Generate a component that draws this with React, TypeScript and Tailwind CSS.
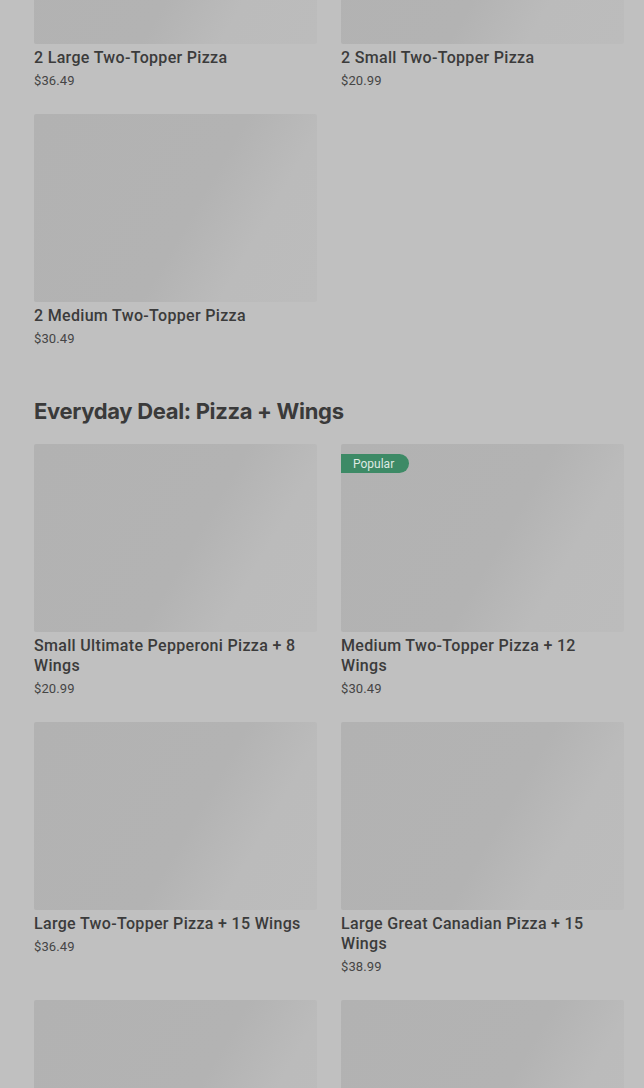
import React from "react";

type Item = { name: string; price: string; popular?: boolean };

const Card = ({ item }: { item: Item }) => (
  <div className="flex flex-col">
    <div className="relative h-[188px] rounded-[2px] bg-[linear-gradient(120deg,#b2b2b2_0%,#b3b3b3_55%,#bbbbbb_75%,#bcbcbc_100%)]">
      {item.popular && (
        <div className="absolute left-0 top-[10px] flex h-[19px] w-[68px] items-center rounded-r-full bg-[#3d8a66] pl-[12px] text-[12px] text-[#dfe9e3]">
          Popular
        </div>
      )}
    </div>
    <div className="mt-[4px] text-[16px] font-medium leading-[20px] tracking-[0.02em] text-[#3b3b3b]">{item.name}</div>
    <div className="mt-[3px] text-[13px] leading-[20px] tracking-[0.01em] text-[#454545]">{item.price}</div>
  </div>
);

export default function App() {
  const first: Item[] = [
    { name: "2 Large Two-Topper Pizza", price: "$36.49" },
    { name: "2 Small Two-Topper Pizza", price: "$20.99" },
    { name: "2 Medium Two-Topper Pizza", price: "$30.49" },
  ];
  const second: Item[] = [
    { name: "Small Ultimate Pepperoni Pizza + 8 Wings", price: "$20.99" },
    { name: "Medium Two-Topper Pizza + 12 Wings", price: "$30.49", popular: true },
    { name: "Large Two-Topper Pizza + 15 Wings", price: "$36.49" },
    { name: "Large Great Canadian Pizza + 15 Wings", price: "$38.99" },
    { name: "", price: "" },
    { name: "", price: "" },
  ];
  return (
    <div
      className="h-[1088px] w-[644px] overflow-hidden bg-[#c0c0c0] pl-[34px] pr-[20px]"
      style={{ fontFamily: "Roboto, 'Liberation Sans', sans-serif" }}
    >
      <div className="-mt-[144px] grid grid-cols-2 gap-x-[24px] gap-y-[23px]">
        {first.map((it, i) => (
          <Card key={i} item={it} />
        ))}
      </div>
      <h2
        className="mt-[48px] text-[22px] font-bold leading-[28px] tracking-[-0.015em] text-[#3a3a3a]"
        style={{ fontFamily: "Inter, 'Liberation Sans', sans-serif" }}
      >
        Everyday Deal: Pizza + Wings
      </h2>
      <div className="mt-[19px] grid grid-cols-2 gap-x-[24px] gap-y-[23px]">
        {second.map((it, i) => (
          <Card key={i} item={it} />
        ))}
      </div>
    </div>
  );
}
